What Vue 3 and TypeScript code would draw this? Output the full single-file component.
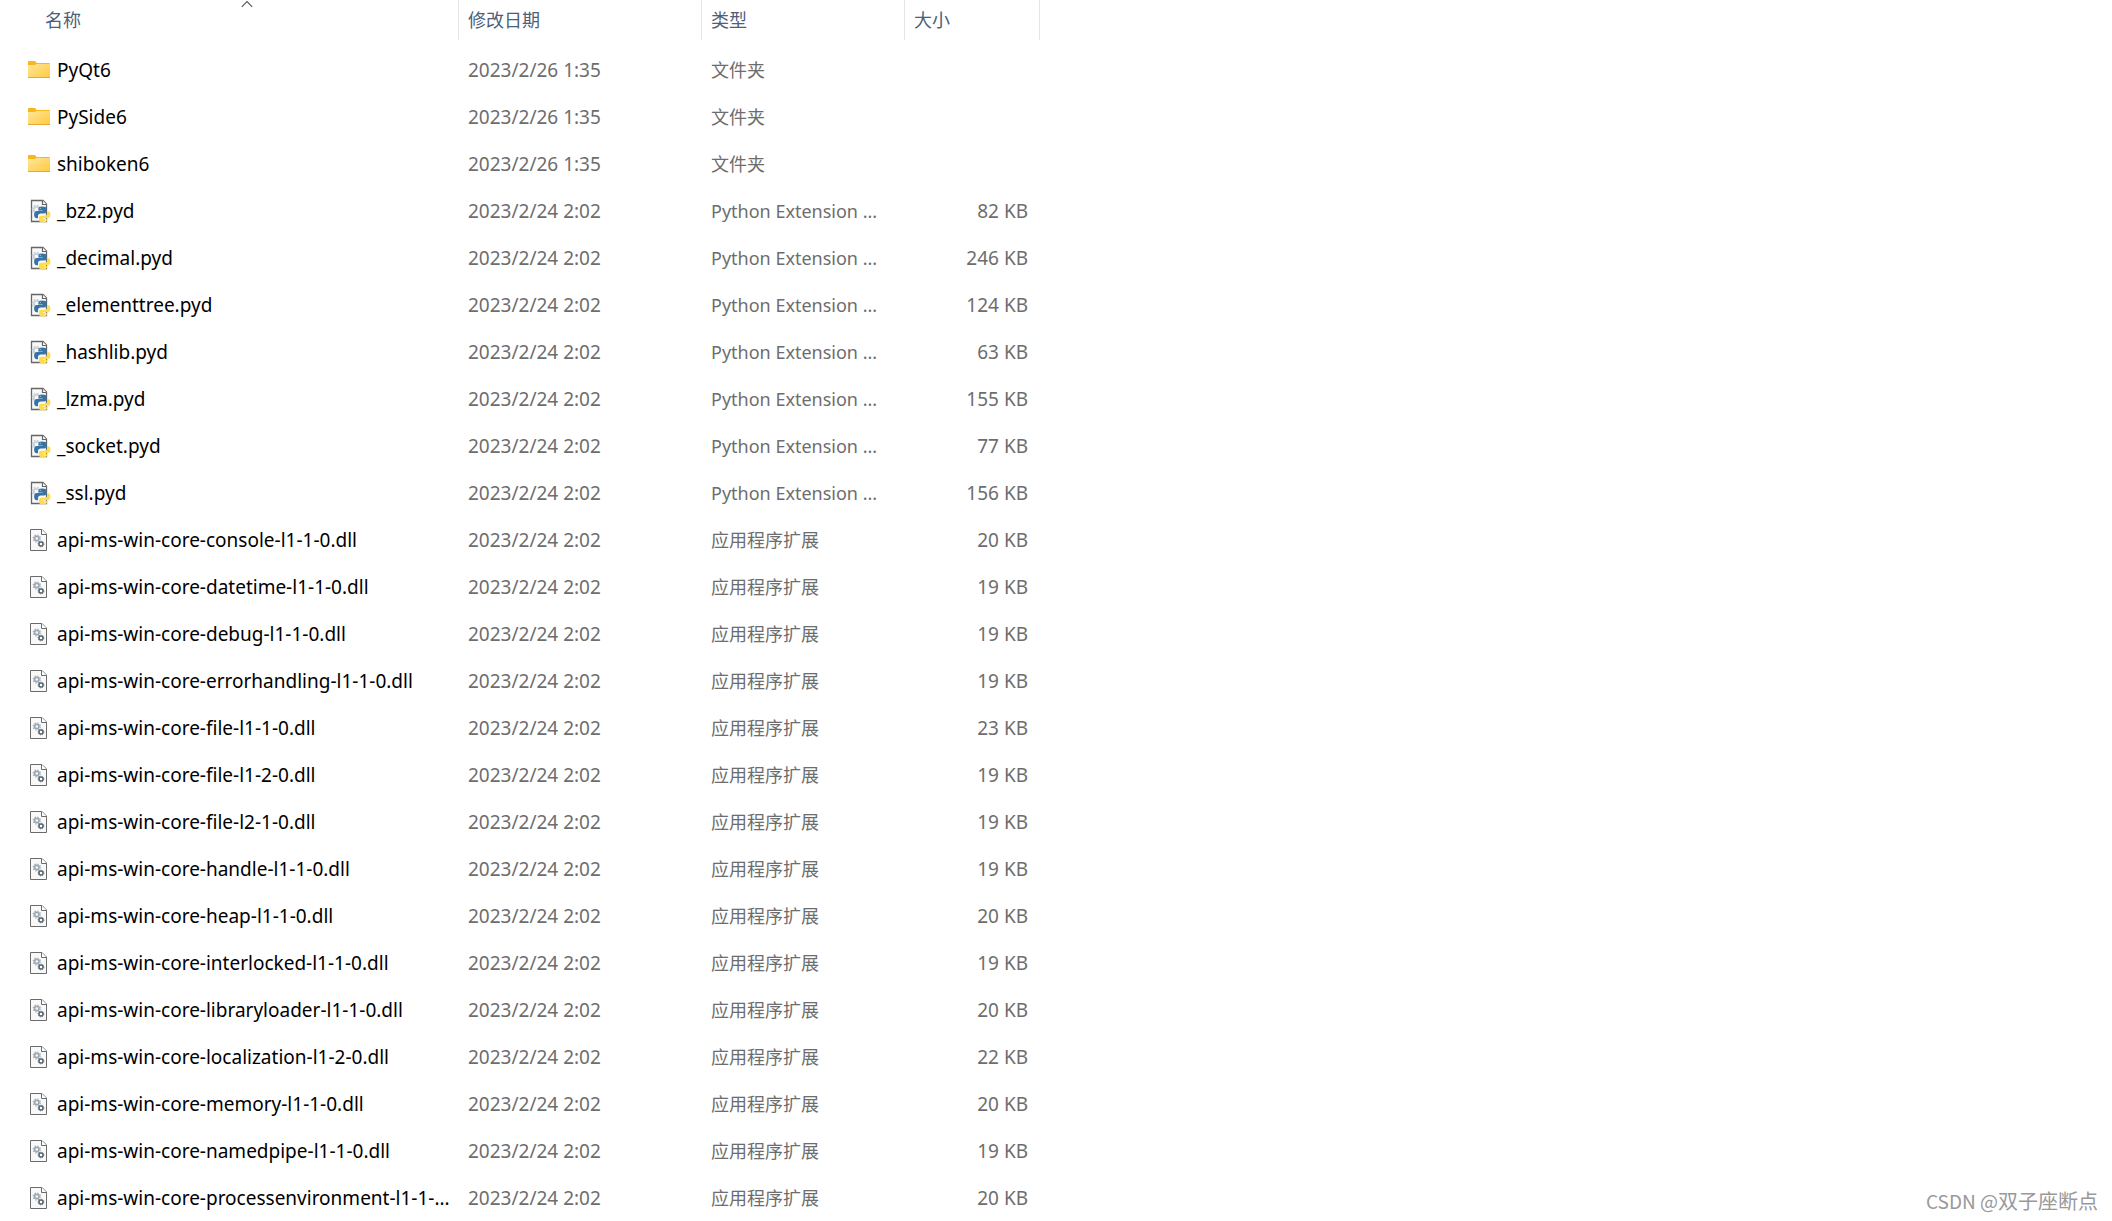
<script setup lang="ts">
type Kind = 'folder' | 'pyd' | 'dll'

interface Entry {
  name: string
  kind: Kind
  modified: string
  size: string
}

const folder = (name: string): Entry => ({ name, kind: 'folder', modified: '2023/2/26 1:35', size: '' })
const pyd = (name: string, kb: number): Entry => ({ name: `${name}.pyd`, kind: 'pyd', modified: '2023/2/24 2:02', size: `${kb} KB` })
const dll = (name: string, kb: number): Entry => ({ name: `api-ms-win-core-${name}`, kind: 'dll', modified: '2023/2/24 2:02', size: `${kb} KB` })

const typeNames: Record<Kind, string> = {
  folder: '文件夹',
  pyd: 'Python Extension ...',
  dll: '应用程序扩展',
}

const columns = [
  { key: 'name', label: '名称', sorted: true },
  { key: 'date', label: '修改日期', sorted: false },
  { key: 'type', label: '类型', sorted: false },
  { key: 'size', label: '大小', sorted: false },
]

const entries: Entry[] = [
  folder('PyQt6'),
  folder('PySide6'),
  folder('shiboken6'),
  pyd('_bz2', 82),
  pyd('_decimal', 246),
  pyd('_elementtree', 124),
  pyd('_hashlib', 63),
  pyd('_lzma', 155),
  pyd('_socket', 77),
  pyd('_ssl', 156),
  dll('console-l1-1-0.dll', 20),
  dll('datetime-l1-1-0.dll', 19),
  dll('debug-l1-1-0.dll', 19),
  dll('errorhandling-l1-1-0.dll', 19),
  dll('file-l1-1-0.dll', 23),
  dll('file-l1-2-0.dll', 19),
  dll('file-l2-1-0.dll', 19),
  dll('handle-l1-1-0.dll', 19),
  dll('heap-l1-1-0.dll', 20),
  dll('interlocked-l1-1-0.dll', 19),
  dll('libraryloader-l1-1-0.dll', 20),
  dll('localization-l1-2-0.dll', 22),
  dll('memory-l1-1-0.dll', 20),
  dll('namedpipe-l1-1-0.dll', 19),
  dll('processenvironment-l1-1-...', 20),
]
</script>

<template>
  <main class="explorer">
    <svg class="defs" width="0" height="0" aria-hidden="true">
      <defs>
        <linearGradient id="folder-face" x1="0" y1="0" x2="1" y2="1">
          <stop offset="0" stop-color="#ffe69c" />
          <stop offset="1" stop-color="#ffca3c" />
        </linearGradient>
      </defs>
    </svg>

    <table class="files">
      <colgroup>
        <col v-for="col in columns" :key="col.key" :class="`col-${col.key}`" />
      </colgroup>
      <thead>
        <tr>
          <th v-for="col in columns" :key="col.key" scope="col" :aria-sort="col.sorted ? 'ascending' : undefined">
            <button type="button" class="head">
              {{ col.label }}
              <svg v-if="col.sorted" class="caret" width="12" height="8" viewBox="0 0 12 8" aria-hidden="true">
                <path d="M.8 6.8 6 1.6l5.2 5.2" fill="none" stroke="#555" stroke-width="1.1" />
              </svg>
            </button>
          </th>
        </tr>
      </thead>
      <tbody>
        <tr v-for="entry in entries" :key="entry.name">
          <td>
            <div class="name">
              <svg v-if="entry.kind === 'folder'" class="icon" width="24" height="25" viewBox="0 0 24 25" aria-hidden="true">
                <path d="M0 4q0-1 1-1h5.600q.7 0 1.100.8l.8 1.200H21q1 0 1 1V8H0z" fill="#f8b51c" />
                <path d="M0 7h6.600q.6 0 1-.5l.5-.5H22v13q0 1-1 1H1q-1 0-1-1z" fill="url(#folder-face)" />
                <path d="M0 19.500h22" stroke="#e5a937" />
              </svg>
              <svg v-else-if="entry.kind === 'pyd'" class="icon" width="24" height="25" viewBox="0 0 24 25" aria-hidden="true">
                <path d="M3.500 1.500h11.500L18.500 5v17.500h-15z" fill="#f9f9f9" stroke="#666" stroke-width="1.300" />
                <path d="M14.500 1.500v4h4" fill="#fff" stroke="#666" stroke-width="1.200" />
                <circle cx="8.500" cy="10.500" r="2.800" fill="none" stroke="#c9d3da" stroke-width="2" />
                <circle cx="8.500" cy="10.500" r="4.200" fill="none" stroke="#c9d3da" stroke-width="1.400" stroke-dasharray="1.700 1.600" />
                <path d="M14.200 7.500c-3 0-3.700.8-3.700 2.200v1.700h4v.7H9c-1.800 0-2.900 1.400-2.900 3.600s1 3.600 2.600 3.600H10v-2.200c0-1.700 1.300-2.700 2.700-2.700h3.600c1.300 0 2.200-1 2.200-2.200V9.700c0-1.500-1.500-2.200-4.300-2.200z" fill="#3673a7" />
                <path d="M15 23.400c3 0 3.900-.8 3.900-2.200v-1.400h-4v-.7h5.200c1.500 0 2.300-1.300 2.300-3.500s-.8-3.400-2.300-3.400h-1v2c0 1.600-1.100 2.600-2.500 2.600H13c-1.300 0-2.100.9-2.100 2.200v2.200c0 1.400 1.400 2.200 4.100 2.200z" fill="#ffdc4e" />
                <circle cx="12.300" cy="9.400" r=".6" fill="#a9c4da" />
                <circle cx="17" cy="21.500" r=".6" fill="#fff" />
              </svg>
              <svg v-else class="icon" width="24" height="25" viewBox="0 0 24 25" aria-hidden="true">
                <path d="M2.500 1.500h11.500l4.500 4.500v16.500h-16z" fill="#f9f9f9" stroke="#6b6b6b" />
                <path d="M13.500 1.500v5h5" fill="#fff" stroke="#6b6b6b" />
                <circle cx="8.800" cy="10.500" r="2.200" fill="none" stroke="#9ca8b4" stroke-width="1.700" />
                <circle cx="8.800" cy="10.500" r="3.500" fill="none" stroke="#9ca8b4" stroke-width="1.200" stroke-dasharray="1.400 1.350" />
                <circle cx="13" cy="16" r="2" fill="#fff" stroke="#5b6670" stroke-width="1.500" />
                <circle cx="13" cy="16" r="2.900" fill="none" stroke="#5b6670" stroke-width=".8" stroke-dasharray="1.200 1.080" />
              </svg>
              <span class="latin">{{ entry.name }}</span>
            </div>
          </td>
          <td class="latin">{{ entry.modified }}</td>
          <td>{{ typeNames[entry.kind] }}</td>
          <td class="latin size">{{ entry.size }}</td>
        </tr>
      </tbody>
    </table>

    <div class="watermark"><span class="site">CSDN @</span>双子座断点</div>
  </main>
</template>

<style>
body {
  margin: 0;
  background: #fff;
}
</style>

<style scoped>
.explorer {
  position: relative;
  min-height: 100vh;
  overflow: hidden;
  font-family: "Noto Sans", "Noto Sans CJK SC", sans-serif;
  font-size: 18px;
  line-height: 25px;
  color: #6d6d6d;
}

.defs {
  position: absolute;
}

.files {
  width: 1012px;
  margin-left: 28px;
  table-layout: fixed;
  border-collapse: separate;
  border-spacing: 0;
}

.col-name {
  width: 431px;
}

.col-date {
  width: 243px;
}

.col-type {
  width: 203px;
}

.col-size {
  width: 135px;
}

th {
  height: 46px;
  padding: 0;
  vertical-align: top;
  font-weight: 400;
}

.head {
  position: relative;
  display: block;
  width: 100%;
  height: 40px;
  padding: 0 9px;
  border: 0;
  border-right: 1px solid #e5e5e5;
  background: none;
  font: inherit;
  color: #4c607a;
  text-align: left;
}

th:first-child {
  padding-left: 8px;
}

.caret {
  position: absolute;
  top: 0;
  left: 50%;
  transform: translateX(-50%);
}

td {
  height: 47px;
  padding: 2px 9px 0;
  box-sizing: border-box;
  white-space: nowrap;
}

td:first-child {
  padding-left: 0;
  padding-right: 0;
}

.latin {
  font-size: 19px;
}

.size {
  padding-right: 12px;
  text-align: right;
}

.name {
  display: flex;
  align-items: center;
  gap: 5px;
  color: #000;
}

.icon {
  flex: none;
}

.watermark {
  position: absolute;
  right: 14px;
  bottom: 8px;
  font-family: "Noto Sans CJK SC", sans-serif;
  font-size: 20px;
  color: #999;
}

.site {
  font-size: 19px;
}
</style>
